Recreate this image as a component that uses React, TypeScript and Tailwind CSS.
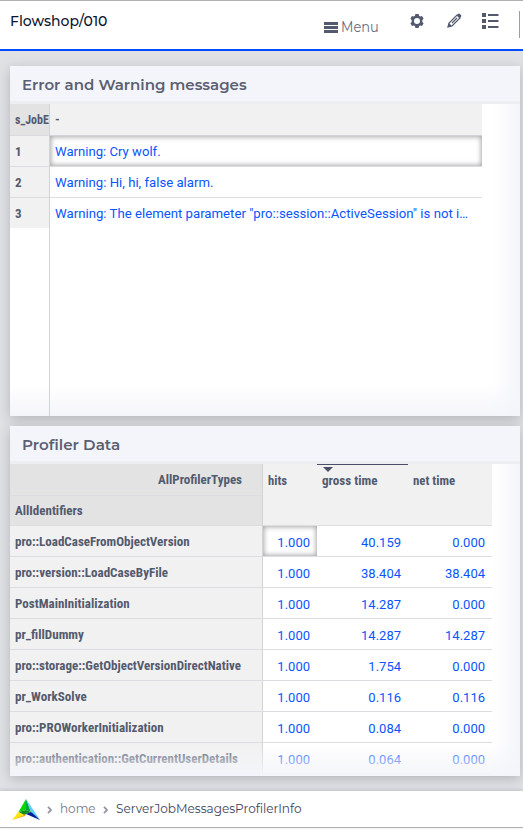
import { useLayoutEffect, useRef, useState } from 'react';
import type { ReactNode } from 'react';

/* Text that is squeezed or stretched to a fixed advance width. */
function Fit({ w, right, children }: { w: number; right?: boolean; children: ReactNode }) {
  const ref = useRef<HTMLSpanElement>(null);
  const [scale, setScale] = useState(1);
  useLayoutEffect(() => {
    if (ref.current) setScale(w / ref.current.offsetWidth);
  }, [w]);
  return (
    <span className={'flex whitespace-nowrap ' + (right ? 'justify-end' : 'justify-start')}>
      <span
        ref={ref}
        className={'block shrink-0 ' + (right ? 'origin-right' : 'origin-left')}
        style={{ transform: `scaleX(${scale})` }}
      >
        {children}
      </span>
    </span>
  );
}

const messages: [string, number][] = [
  ['Warning: Cry wolf.', 106],
  ['Warning: Hi, hi, false alarm.', 158],
  ['Warning: The element parameter "pro::session::ActiveSession" is not i…', 413],
];

const rows: [string, number, string, string, string][] = [
  ['pro::LoadCaseFromObjectVersion', 175, '1.000', '40.159', '0.000'],
  ['pro::version::LoadCaseByFile', 152.5, '1.000', '38.404', '38.404'],
  ['PostMainInitialization', 115, '1.000', '14.287', '0.000'],
  ['pr_fillDummy', 68.5, '1.000', '14.287', '14.287'],
  ['pro::storage::GetObjectVersionDirectNative', 226, '1.000', '1.754', '0.000'],
  ['pr_WorkSolve', 71.500, '1.000', '0.116', '0.116'],
  ['pro::PROWorkerInitialization', 149, '1.000', '0.084', '0.000'],
  ['pro::authentication::GetCurrentUserDetails', 223, '1.000', '0.064', '0.000'],
];

const brand = 'font-[Montserrat,Inter,sans-serif]';
const condensed = "font-['Roboto_Condensed',Roboto,sans-serif] text-[13px] font-bold text-[#535a6e]";
const focus = 'shadow-[inset_0_0_5px_1px_rgba(0,0,0,0.35)]';

function Card({ title, w, children }: { title: string; w: number; children: ReactNode }) {
  return (
    <section className="relative h-[350px] w-[510px] overflow-hidden bg-white">
      <div className={brand + ' h-[35px] bg-[#f4f5fa] pl-3 text-[15px] leading-[37px] font-semibold text-[#5a6072]'}>
        <Fit w={w}>{title}</Fit>
      </div>
      <div className="h-[3px] bg-[#edeef2]" />
      {children}
      <div className="absolute right-0 bottom-0 h-[312px] w-[28px] bg-linear-to-r from-[#f4f5fa]/0 to-[#f4f5fa]" />
      <div className="absolute bottom-0 left-0 h-[32px] w-full bg-linear-to-b from-[#f4f5fa]/0 to-[#f4f5fa]" />
    </section>
  );
}

function Chevron() {
  return (
    <svg width="5" height="8" viewBox="0 0 5 8" className="mt-[2px]">
      <path d="M1 .8 4 4 1 7.2" fill="none" stroke="#9095a2" strokeWidth="1.8" />
    </svg>
  );
}

function Num({ children, className }: { children: string; className: string }) {
  return (
    <div className={className + ' pr-[7px] text-right text-[13px] leading-[33px] text-[#0a55ff]'}>
      <Fit right w={children.length === 6 ? 40 : 33}>{children}</Fit>
    </div>
  );
}

export default function App() {
  return (
    <div className="flex h-[830px] w-[523px] flex-col overflow-hidden bg-white font-[Roboto,sans-serif]">
      <header className="flex h-[51px] shrink-0 border-t border-b-2 border-t-[#b0b0b0] border-b-[#004bff] bg-white">
        <div className={brand + ' w-[324px] pl-[10px] text-[14px] leading-[40px] font-medium text-[#0b1430]'}>
          <Fit w={97}>Flowshop/010</Fit>
        </div>
        <div className="flex w-[86px] pt-[15px]">
          <svg width="14" height="11" viewBox="0 0 14 11" className="mt-[6px] mr-[3px]">
            <path d="M0 0h14v3H0zM0 4h14v3H0zM0 8h14v3H0z" fill="#535a6e" />
          </svg>
          <div className={brand + ' text-[14px] leading-[23px] font-normal text-[#666c7d]'}>
            <Fit w={38}>Menu</Fit>
          </div>
        </div>
        <svg width="14" height="14" viewBox="0 0 14 14" className="mt-[13px]">
          <path
            fill="#535a6e"
            fillRule="evenodd"
            d="M5.4 0h3.2l.5 1.8 1.1.6 1.8-.5 1.6 2.8-1.3 1.3v1.9l1.3 1.3-1.6 2.8-1.8-.5-1.1.6-.5 1.8H5.4l-.5-1.8-1.1-.6-1.8.5L.4 9.2l1.3-1.3V6L.4 4.7 2 1.9l1.8.5 1.1-.6zM7 4a3 3 0 1 0 0 6 3 3 0 0 0 0-6"
          />
        </svg>
        <svg width="15" height="15" viewBox="0 0 15 15" className="mt-[12px] ml-[23px]">
          <path d="M1 14 2 10 10 2 13 5 5 13zM5 10l5-5" fill="none" stroke="#535a6e" strokeWidth="1.2" />
          <path d="m10 2 1.200-1.200q.7-.7 1.400 0l1.500 1.500q.7.7 0 1.300L13 5zM1.900 10l3.100 3-4.300 1.300z" fill="#535a6e" />
        </svg>
        <svg width="17" height="16" viewBox="0 0 17 16" className="mt-[12px] ml-[20px]">
          <path d="M0 0h4v4H0zM0 6h4v4H0zM0 12h4v4H0zM6 1h10.500v2H6zM6 7h10.500v2H6zM6 13h10.500v2H6z" fill="#535a6e" />
        </svg>
        <div className="mt-[10px] ml-[20px] h-[27px] w-px bg-[#9a9eaa]" />
      </header>

      <main className="flex h-[740px] shrink-0 flex-col gap-[10px] overflow-hidden bg-[#e0e1e5] pt-[15px] pl-[10px]">
        <div className="h-[350px] w-[510px] shadow-[0_3px_12px_rgba(0,0,0,0.2)]">
          <Card title="Error and Warning messages" w={225}>
            <div className="flex h-[312px]">
              <div className={condensed + ' relative z-10 w-[40px] border-r border-[#d2d3d7] leading-[31px]'}>
                <div className="h-8 border-b border-[#d9dade] bg-[#e3e3e3] pl-[5px]">
                  <Fit w={34}>s_JobE</Fit>
                </div>
                {['1', '2', '3'].map((n) => (
                  <div key={n} className="h-[31px] border-b border-[#dcdde1] bg-[#f1f1f1] pl-[5px] last:h-[30px] last:border-0">{n}</div>
                ))}
              </div>
              <div className="w-[432px] text-[13px] leading-[31px] text-[#0a55ff]">
                <div className={condensed + ' h-8 border-b border-[#d2d3d7] bg-[#f1f1f1] pl-[5px] leading-[31px]'}>-</div>
                {messages.map(([m, w], i) => (
                  <div key={m} className={'h-[31px] border-b border-[#dcdde1] pl-[5px] last:border-0 ' + (i === 0 ? focus : '')}>
                    <Fit w={w}>{m}</Fit>
                  </div>
                ))}
              </div>
            </div>
          </Card>
        </div>

        <div className="h-[350px] w-[510px] shadow-[0_3px_12px_rgba(0,0,0,0.2)]">
          <Card title="Profiler Data" w={98}>
            <div className={condensed + ' flex h-[62px] w-[482px]'}>
              <div className="w-[253px] border-r border-[#d2d3d7] bg-[#e3e3e3]">
                <div className="h-8 border-b border-[#dcdde0] pr-5 leading-[31px]">
                  <Fit right w={84}>AllProfilerTypes</Fit>
                </div>
                <div className="h-[30px] border-b border-[#dcdde1] pl-[5px] leading-[30px]">
                  <Fit w={68}>AllIdentifiers</Fit>
                </div>
              </div>
              <div className="flex flex-1 border-b border-[#dcdde1] bg-[#f1f1f1] leading-[33px]">
                <div className="w-[54px] pl-[5px]"><Fit w={19.5}>hits</Fit></div>
                <div className="relative w-[91px] pl-[5px] shadow-[inset_0_1px_#4b5067]">
                  <svg width="10" height="5" className="absolute top-[3px] left-[6px]">
                    <path d="M0 0h10L5 5z" fill="#4b5067" />
                  </svg>
                  <Fit w={55.5}>gross time</Fit>
                </div>
                <div className="pl-[5px]"><Fit w={42.5}>net time</Fit></div>
              </div>
            </div>
            <div className="h-[250px] overflow-hidden">
              {rows.map(([name, w, hits, gross, net], i) => (
                <div key={name} className="flex h-[31px] w-[482px]">
                  <div className={condensed + ' w-[253px] border-r border-b border-r-[#d2d3d7] border-b-[#dcdde1] bg-[#f1f1f1] pl-[5px] leading-[31px]'}>
                    <Fit w={w}>{name}</Fit>
                  </div>
                  <div className="flex flex-1 border-b border-[#dcdde1]">
                    <Num className={'w-[54px] ' + (i === 0 ? focus : '')}>{hits}</Num>
                    <Num className="w-[91px]">{gross}</Num>
                    <Num className="w-[84px]">{net}</Num>
                  </div>
                </div>
              ))}
            </div>
          </Card>
        </div>
      </main>

      <footer className={brand + ' flex h-[37px] shrink-0 items-center border-b border-[#b0b0b0] bg-white pl-[12px] text-[13px] font-normal shadow-[0_-1px_4px_rgba(0,0,0,0.15)]'}>
        <svg width="28" height="21" viewBox="0 0 28 21" className="mt-px">
          <path d="M14 0 6.500 13 14 11z" fill="#00d900" />
          <path d="m14 0 5 13-5-2z" fill="#00a83a" />
          <path d="m6.500 13 7.500-2 5 2-7 3z" fill="#168b20" />
          <path d="M6.500 13 0 21l12-5z" fill="#ffe600" />
          <path d="m0 21 12-5 2-1-1 2z" fill="#ff9c00" />
          <path d="m14 0 14 21-9-8z" fill="#58cfff" />
          <path d="m19 13 9 8-7-5z" fill="#087fff" />
          <path d="m14 15 5-2 9 8z" fill="#001b99" />
        </svg>
        <div className="ml-[7px]"><Chevron /></div>
        <div className="ml-[8px] w-[36px] text-[#73798a]"><Fit w={36}>home</Fit></div>
        <div className="ml-[7px]"><Chevron /></div>
        <div className="ml-[8px] text-[#3c4359]"><Fit w={185.5}>ServerJobMessagesProfilerInfo</Fit></div>
      </footer>
    </div>
  );
}
